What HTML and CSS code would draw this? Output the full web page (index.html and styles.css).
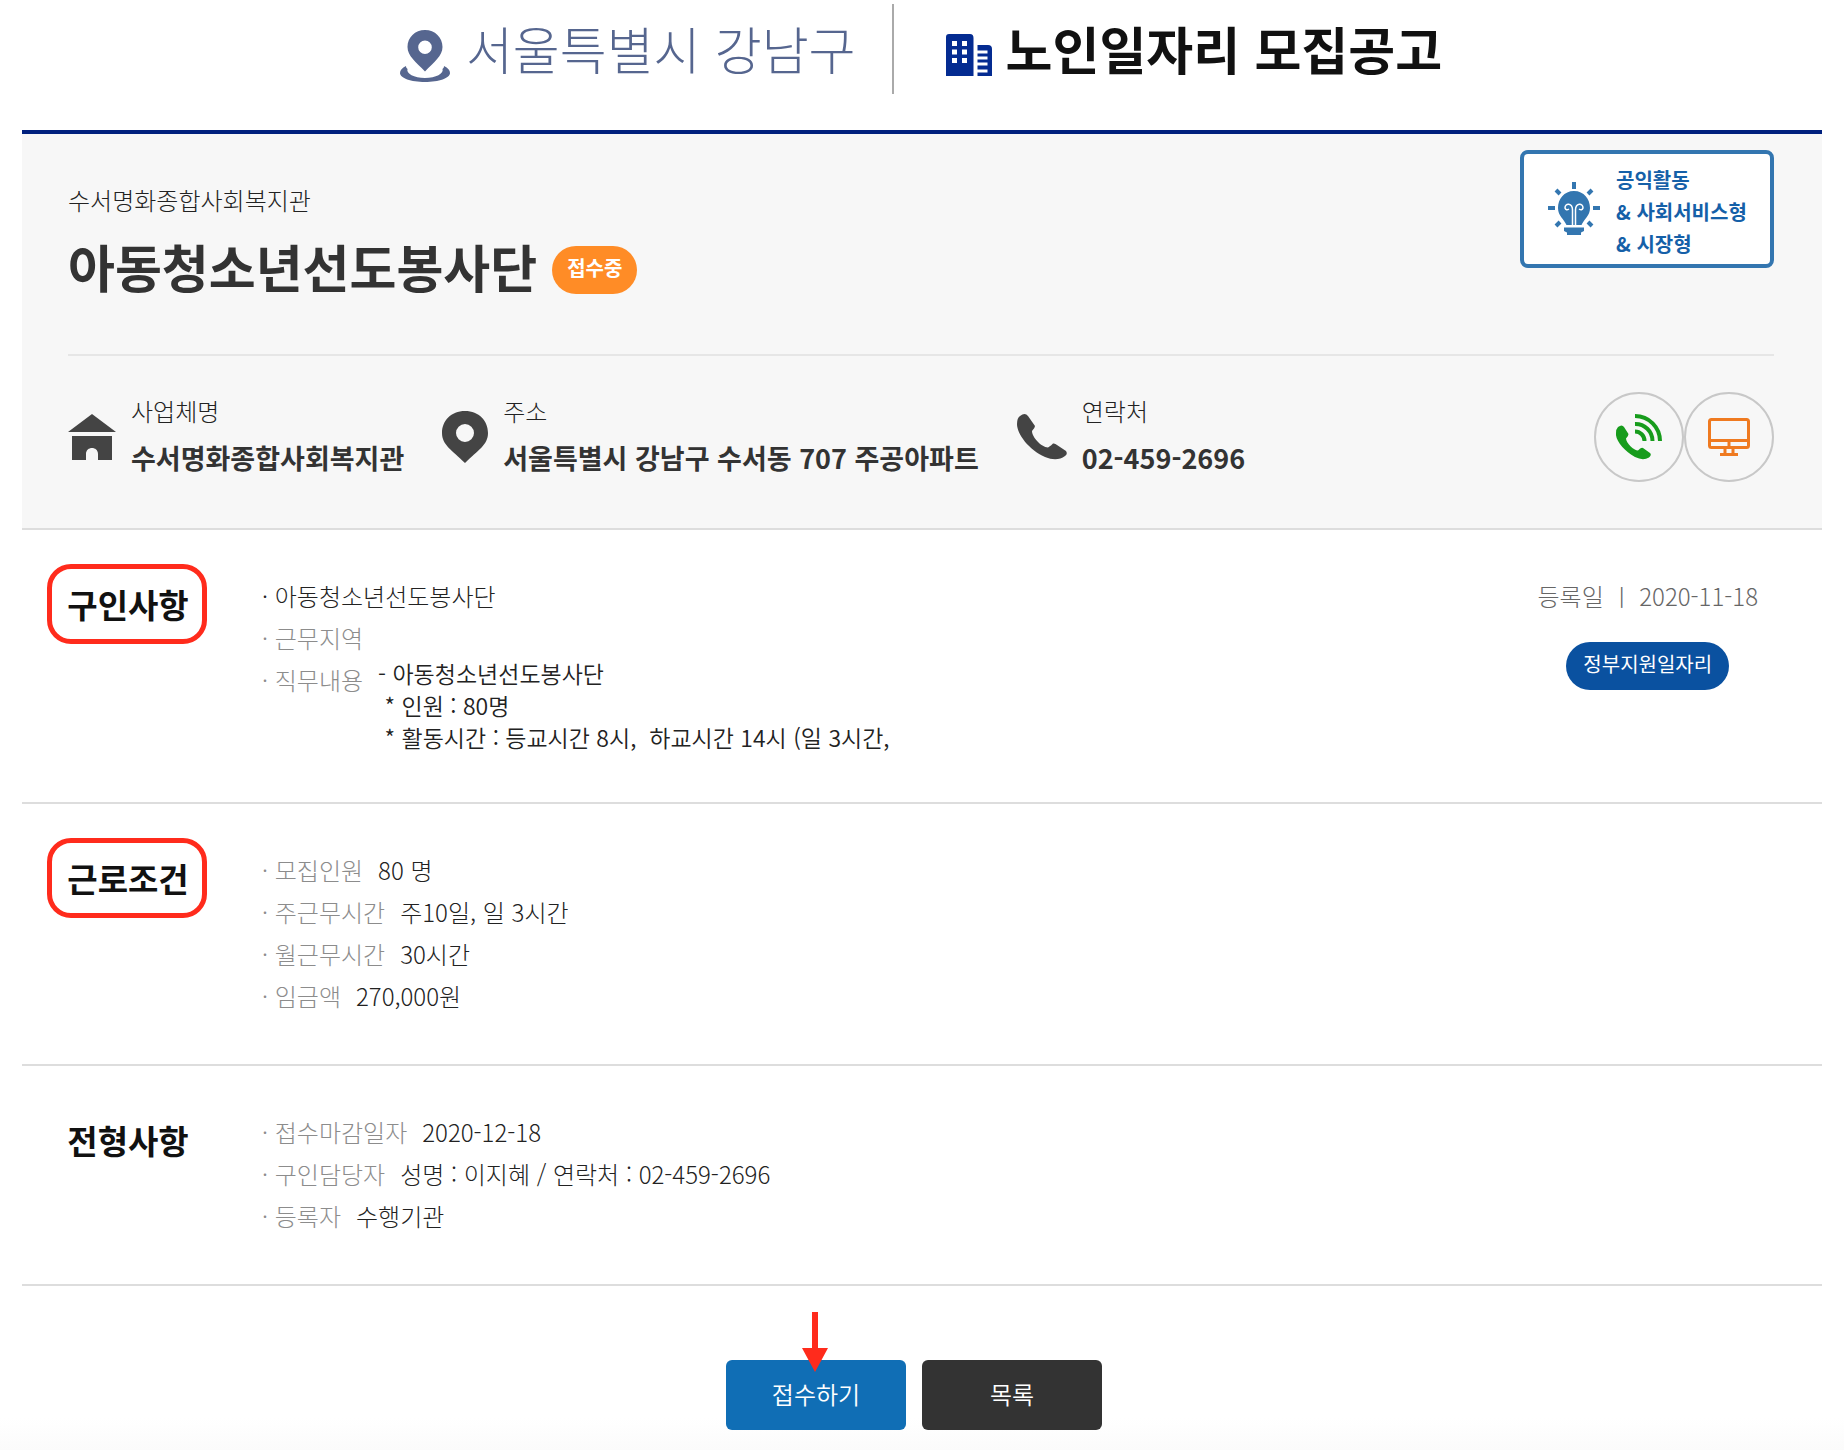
FILE: index.html
```html
<!DOCTYPE html>
<html lang="ko">
<head>
<meta charset="utf-8">
<meta name="viewport" content="width=device-width, initial-scale=1">
<title>노인일자리 모집공고</title>
<link rel="stylesheet" href="styles.css">
</head>
<body>
<header class="page-header">
  <p class="region">
    <svg width="50" height="52" viewBox="0 0 50 52" aria-hidden="true"><path fill="currentColor" fill-rule="evenodd" d="M25 0C15 0 7.500 7.500 7.500 17C7.500 26 16 32 25 41.500C34 32 42.500 26 42.500 17C42.500 7.500 35 0 25 0ZM25 10.500A6.800 6.800 0 1 1 25 24.100A6.800 6.800 0 0 1 25 10.500Z"/><path fill="currentColor" d="M6 36C2 38 0 40 0 43C0 48 11 52 25 52S50 48 50 43C50 40 48 38 44 36C44 37.500 43.500 38 42.500 39C44 43.500 36 48 25 48S6 43.500 7.500 39C6.500 38 6 37.500 6 36Z"/></svg>
    <span>서울특별시 강남구</span>
  </p>
  <h1 class="page-title">
    <svg width="46" height="42" viewBox="0 0 46 42" aria-hidden="true"><path fill="#042b91" fill-rule="evenodd" d="M3 0H24Q27.500 0 27.500 4V42H0V3Q0 0 3 0ZM6 7V12H11V7ZM16 7V12H21V7ZM6 15.500V20.500H11V15.500ZM16 15.500V20.500H21V15.500ZM6 24V29H11V24ZM16 24V29H21V24ZM31.500 11H42Q46 11 46 15V42H31.500V38.500H41.500V35.500H31.500V31.500H41.500V28.500H31.500V25.500H41.500V22.500H31.500V19.500H41.500V16.500H31.500Z"/></svg>
    <span>노인일자리 모집공고</span>
  </h1>
</header>

<main class="notice">
  <section class="summary">
    <div class="summary-top">
      <div class="summary-name">
        <p class="org">수서명화종합사회복지관</p>
        <div class="title-row">
          <h2 class="job-title">아동청소년선도봉사단</h2>
          <span class="status">접수중</span>
        </div>
      </div>
      <div class="job-type">
        <svg width="52" height="54" viewBox="0 0 52 54" aria-hidden="true"><g stroke="#3376b0" stroke-width="4" fill="none"><path d="M26 0V7M0 26H7M45 26H52M8 8L12 12M44 8L40 12M8 44L12 40M44 44L40 40"/></g><path fill="#3376b0" d="M26 9C16 9 10 17 10 26C10 34 16 37 18.500 43H33.500C36 37 42 34 42 26C42 17 36 9 26 9ZM16 45.500H36V49L33 50.500V53H19V50.500L16 49Z"/><path stroke="#fff" stroke-width="1.500" fill="none" d="M24.500 43V28C24.500 21 17 20.500 17 26Q18 29 21 27M27.500 43V28C27.500 21 35 20.500 35 26Q34 29 31 27"/></svg>
        <p>공익활동<br>&amp; 사회서비스형<br>&amp; 시장형</p>
      </div>
    </div>
    <div class="summary-info">
      <dl class="contact">
        <div class="contact-item">
          <svg width="48" height="46" viewBox="0 0 48 46" aria-hidden="true"><path fill="#444" d="M24 0L48 18H0ZM4 22H44V46H30V40C30 32 18 32 18 40V46H4Z"/></svg>
          <div><dt>사업체명</dt><dd>수서명화종합사회복지관</dd></div>
        </div>
        <div class="contact-item">
          <svg width="46" height="52" viewBox="0 0 46 52" aria-hidden="true"><path fill="#444" fill-rule="evenodd" d="M23 0C9 0 0 10 0 22C0 34 10 39 23 52C36 39 46 34 46 22C46 10 37 0 23 0ZM23 13A9 9 0 1 1 23 31A9 9 0 0 1 23 13Z"/></svg>
          <div><dt>주소</dt><dd>서울특별시 강남구 수서동 707 주공아파트</dd></div>
        </div>
        <div class="contact-item">
          <svg width="50" height="46" viewBox="0 0 50 46" aria-hidden="true"><path fill="#444" d="M3 2Q8 -2 11 2L18 12Q18 14 15 17C15 23 24 33 31 33.500Q35 31 36 29.500Q38 29 40 31L49 37Q51 40 48 42Q40 48 28 43C12 36 0 20 0 10Q0 4 3 2Z"/></svg>
          <div><dt>연락처</dt><dd>02-459-2696</dd></div>
        </div>
      </dl>
      <div class="round-links">
        <a class="round-link" href="tel:02-459-2696" aria-label="전화 걸기">
          <svg width="46" height="46" viewBox="0 0 46 46" aria-hidden="true"><path fill="#179c1c" d="M2 13Q6 10 8 13L12.500 20Q12.500 22 10 24.500C10 29 18 36.500 22 36.500Q25 33 27 34L34 39Q36 41 33 43.500Q27 47 19 43C8 37 -1 26 0 19Q0 15 2 13Z"/><path fill="none" stroke="#179c1c" stroke-width="4" d="M19 2A25 25 0 0 1 44 27M19 10A17 17 0 0 1 36.500 27M19 17.500A9.500 9.500 0 0 1 28.500 27"/></svg>
        </a>
        <a class="round-link" href="#" aria-label="홈페이지">
          <svg width="42" height="38" viewBox="0 0 42 38" aria-hidden="true"><rect x="1.500" y="1.500" width="39" height="28" rx="2" fill="none" stroke="#ef7a20" stroke-width="3"/><path fill="none" stroke="#ef7a20" stroke-width="3" d="M1 22.500H41M21 22V28M17 30V36M25 30V36M12 36.500H30"/></svg>
        </a>
      </div>
    </div>
  </section>

  <section class="detail">
    <h3 class="detail-title marked">구인사항</h3>
    <ul class="detail-list">
      <li><span class="value">· 아동청소년선도봉사단</span></li>
      <li><span class="label">· 근무지역</span></li>
      <li><span class="label">· 직무내용</span><div class="duties">- 아동청소년선도봉사단
 * 인원 : 80명
 * 활동시간 : 등교시간 8시,  하교시간 14시 (일 3시간,</div></li>
    </ul>
    <div class="registered">
      <p>등록일 ㅣ 2020-11-18</p>
      <span class="support">정부지원일자리</span>
    </div>
  </section>

  <section class="detail">
    <h3 class="detail-title marked">근로조건</h3>
    <ul class="detail-list">
      <li><span class="label">· 모집인원</span><span class="value">80 명</span></li>
      <li><span class="label">· 주근무시간</span><span class="value">주10일, 일 3시간</span></li>
      <li><span class="label">· 월근무시간</span><span class="value">30시간</span></li>
      <li><span class="label">· 임금액</span><span class="value">270,000원</span></li>
    </ul>
  </section>

  <section class="detail">
    <h3 class="detail-title">전형사항</h3>
    <ul class="detail-list">
      <li><span class="label">· 접수마감일자</span><span class="value">2020-12-18</span></li>
      <li><span class="label">· 구인담당자</span><span class="value">성명 : 이지혜 / 연락처 : 02-459-2696</span></li>
      <li><span class="label">· 등록자</span><span class="value">수행기관</span></li>
    </ul>
  </section>
</main>

<div class="actions">
  <button class="btn btn-apply" type="button">접수하기
    <svg class="pointer" width="26" height="60" viewBox="0 0 26 60" aria-hidden="true"><path fill="#ff2b1c" d="M10 0H16V36H26L13 60L0 36H10Z"/></svg>
  </button>
  <button class="btn btn-list" type="button">목록</button>
</div>
</body>
</html>
```
FILE: styles.css
```css
* {
  box-sizing: border-box;
}

body {
  margin: 0;
  background: #fff;
  color: #222;
  font-family: "Noto Sans CJK KR", sans-serif;
  font-size: 24px;
  font-weight: 300;
  line-height: 42px;
}

h1, h2, h3, p, ul, dl, dd {
  margin: 0;
  padding: 0;
}

ul {
  list-style: none;
}

svg {
  display: block;
  flex: none;
}

/* Header */
.page-header {
  display: flex;
  justify-content: center;
  height: 130px;
  padding: 4px 2px 36px 0;
  font-size: 51px;
  line-height: 88px;
}

.region {
  display: flex;
  align-items: center;
  gap: 16px;
  padding: 0 36px 2px 0;
  border-right: 2px solid #aaa;
  color: #56668f;
}

.region svg {
  margin-top: 16px;
}

.page-title {
  display: flex;
  align-items: center;
  gap: 14px;
  padding: 0 0 2px 52px;
  color: #111;
  font-size: 51px;
  font-weight: 700;
}

.page-title svg {
  margin-top: 14px;
}

/* Summary panel */
.notice {
  margin: 0 22px;
}

.summary {
  padding: 0 48px 0 46px;
  border-top: 4px solid #00207e;
  border-bottom: 2px solid #ddd;
  background: #f7f7f7;
}

.summary-top {
  display: flex;
  justify-content: space-between;
  align-items: flex-start;
  padding: 16px 0 43px;
  border-bottom: 2px solid #e6e6e6;
}

.summary-name {
  padding-top: 29px;
}

.title-row {
  display: flex;
  align-items: center;
  gap: 15px;
  height: 90px;
}

.job-title {
  color: #333;
  font-size: 51px;
  font-weight: 700;
  line-height: 90px;
}

.status,
.support {
  height: 48px;
  border-radius: 24px;
  color: #fff;
  font-size: 20px;
  line-height: 44px;
}

.status {
  margin-top: 8px;
  padding: 0 15px;
  background: #ff8c26;
  font-weight: 700;
}

.job-type {
  display: flex;
  align-items: center;
  gap: 16px;
  width: 254px;
  height: 118px;
  padding-left: 24px;
  border: 4px solid #3376b0;
  border-radius: 8px;
  background: #fff;
  color: #1560a8;
  font-size: 20px;
  font-weight: 700;
  line-height: 32px;
}

.job-type p {
  padding-top: 5px;
}

.summary-info {
  display: flex;
  justify-content: space-between;
  align-items: flex-start;
  padding: 32px 0 46px;
}

.contact {
  display: flex;
  gap: 38px;
}

.contact-item {
  display: flex;
  align-items: center;
  gap: 15px;
}

.contact-item svg {
  margin-top: 4px;
}

.contact dt {
  line-height: 46px;
}

.contact dd {
  color: #333;
  font-size: 27px;
  font-weight: 700;
  line-height: 48px;
}

.round-links {
  display: flex;
  padding-top: 4px;
}

.round-link {
  display: flex;
  align-items: center;
  justify-content: center;
  width: 90px;
  height: 90px;
  border: 2px solid #c8c8c8;
  border-radius: 50%;
}

/* Detail sections */
.detail {
  display: flex;
  align-items: flex-start;
  gap: 55px;
  padding-left: 25px;
  border-bottom: 2px solid #ddd;
}

.detail-title {
  width: 160px;
  height: 80px;
  margin-top: 34px;
  padding-left: 2px;
  border: 5px solid transparent;
  border-radius: 24px;
  color: #111;
  font-size: 33px;
  font-weight: 700;
  line-height: 70px;
  text-align: center;
}

.marked {
  border-color: #ff2b1c;
}

.detail-list {
  flex: 1;
  padding: 45px 0 47px;
}

.detail-list li {
  display: flex;
  align-items: flex-start;
  gap: 15px;
}

.label {
  color: #8c8c8c;
}

.duties {
  margin: -2px 0 2px;
  font-size: 23px;
  font-weight: 350;
  line-height: 32px;
  white-space: pre-wrap;
}

.registered {
  display: flex;
  flex-direction: column;
  align-items: center;
  gap: 25px;
  padding: 45px 64px 0 0;
  color: #666;
}

.support {
  padding: 0 17px;
  background: #0a51a0;
  font-weight: 400;
}

/* Buttons */
.actions {
  display: flex;
  justify-content: center;
  padding: 74px 0 20px;
  background: linear-gradient(to top, #fbfbfb, #fff 32px);
}

.btn {
  position: relative;
  width: 180px;
  height: 70px;
  margin-right: 16px;
  padding: 0 0 2px;
  border: 0;
  border-radius: 6px;
  color: #fff;
  font: inherit;
  font-weight: 350;
}

.btn-apply {
  background: #106eb5;
}

.btn-list {
  background: #333;
}

.pointer {
  position: absolute;
  top: -48px;
  left: 76px;
}
```
